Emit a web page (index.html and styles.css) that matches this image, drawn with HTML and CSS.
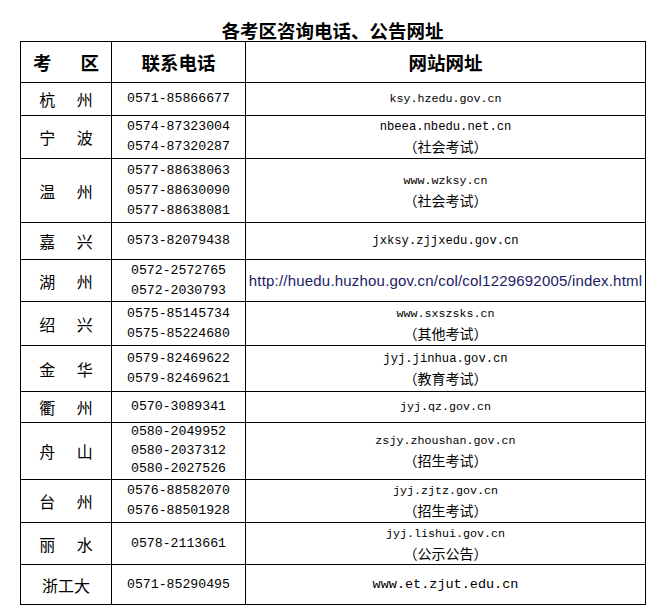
FILE: index.html
```html
<!DOCTYPE html>
<html lang="zh-CN">
<head>
<meta charset="utf-8">
<title>各考区咨询电话、公告网址</title>
<link rel="stylesheet" href="styles.css">
</head>
<body>
<div class="page">
  <h1 class="title">各考区咨询电话、公告网址</h1>
  <table class="grid">
    <colgroup><col class="c1"><col class="c2"><col class="c3"></colgroup>
    <thead>
      <tr class="h41"><th class="region-h">考 区</th><th>联系电话</th><th>网站网址</th></tr>
    </thead>
    <tbody>
      <tr class="h33"><td class="region">杭 州</td><td class="phone">0571-85866677</td><td><div class="url">ksy.hzedu.gov.cn</div></td></tr>
      <tr class="h43"><td class="region">宁 波</td><td class="phone">0574-87323004<br>0574-87320287</td><td><div class="url m">nbeea.nbedu.net.cn</div><div class="note">（社会考试）</div></td></tr>
      <tr class="h64"><td class="region">温 州</td><td class="phone">0577-88638063<br>0577-88630090<br>0577-88638081</td><td><div class="url">www.wzksy.cn</div><div class="note">（社会考试）</div></td></tr>
      <tr class="h37"><td class="region">嘉 兴</td><td class="phone">0573-82079438</td><td><div class="url m">jxksy.zjjxedu.gov.cn</div></td></tr>
      <tr class="h42"><td class="region">湖 州</td><td class="phone">0572-2572765<br>0572-2030793</td><td><div class="link">http://huedu.huzhou.gov.cn/col/col1229692005/index.html</div></td></tr>
      <tr class="h44"><td class="region">绍 兴</td><td class="phone">0575-85145734<br>0575-85224680</td><td><div class="url">www.sxszsks.cn</div><div class="note">（其他考试）</div></td></tr>
      <tr class="h46"><td class="region">金 华</td><td class="phone">0579-82469622<br>0579-82469621</td><td><div class="url m">jyj.jinhua.gov.cn</div><div class="note">（教育考试）</div></td></tr>
      <tr class="h31"><td class="region">衢 州</td><td class="phone">0570-3089341</td><td><div class="url">jyj.qz.gov.cn</div></td></tr>
      <tr class="h57"><td class="region">舟 山</td><td class="phone tight">0580-2049952<br>0580-2037312<br>0580-2027526</td><td><div class="url">zsjy.zhoushan.gov.cn</div><div class="note">（招生考试）</div></td></tr>
      <tr class="h43"><td class="region">台 州</td><td class="phone">0576-88582070<br>0576-88501928</td><td><div class="url">jyj.zjtz.gov.cn</div><div class="note">（招生考试）</div></td></tr>
      <tr class="h42"><td class="region">丽 水</td><td class="phone">0578-2113661</td><td><div class="url">jyj.lishui.gov.cn</div><div class="note">（公示公告）</div></td></tr>
      <tr class="h40"><td class="region">浙工大</td><td class="phone">0571-85290495</td><td><div class="url l">www.et.zjut.edu.cn</div></td></tr>
    </tbody>
  </table>
</div>
</body>
</html>
```

FILE: styles.css
```css
html, body {
  margin: 0;
  padding: 0;
  background: #ffffff;
}

body {
  font-family: "Noto Sans CJK SC", "Noto Sans", sans-serif;
  color: #000000;
}

.page {
  padding: 19px 0 0 20px;
  width: 625px;
}

.title {
  margin: 0;
  text-align: center;
  font-size: 18.5px;
  line-height: 22px;
  font-weight: 700;
}

.grid {
  border-collapse: collapse;
  table-layout: fixed;
  width: 625px;
}

.c1 { width: 91px; }
.c2 { width: 134px; }
.c3 { width: 400px; }

.grid th,
.grid td {
  border: 1px solid #000000;
  padding: 0;
  text-align: center;
  vertical-align: middle;
}

.grid th {
  font-size: 18.5px;
  font-weight: 700;
  line-height: 22px;
}

.region-h {
  word-spacing: 25px;
}

.region {
  font-size: 16px;
  line-height: 20px;
  word-spacing: 18px;
}

.phone {
  font-family: "Liberation Mono", monospace;
  font-size: 13.2px;
  line-height: 20px;
}

.phone.tight {
  line-height: 18.5px;
}

.url {
  font-family: "Liberation Mono", monospace;
  font-size: 11.7px;
  line-height: 19px;
}

.url.m { font-size: 12.2px; }
.url.l { font-size: 13.5px; }

.note {
  font-size: 14px;
  line-height: 19px;
}

.link {
  font-family: "Liberation Sans", Arial, sans-serif;
  font-size: 15px;
  letter-spacing: 0.2px;
  line-height: 20px;
  color: #1c1c66;
  white-space: nowrap;
}

.h31 { height: 31px; }
.h33 { height: 33px; }
.h37 { height: 37px; }
.h40 { height: 40px; }
.h41 { height: 41px; }
.h42 { height: 42px; }
.h43 { height: 43px; }
.h44 { height: 44px; }
.h46 { height: 46px; }
.h57 { height: 57px; }
.h64 { height: 64px; }
```
